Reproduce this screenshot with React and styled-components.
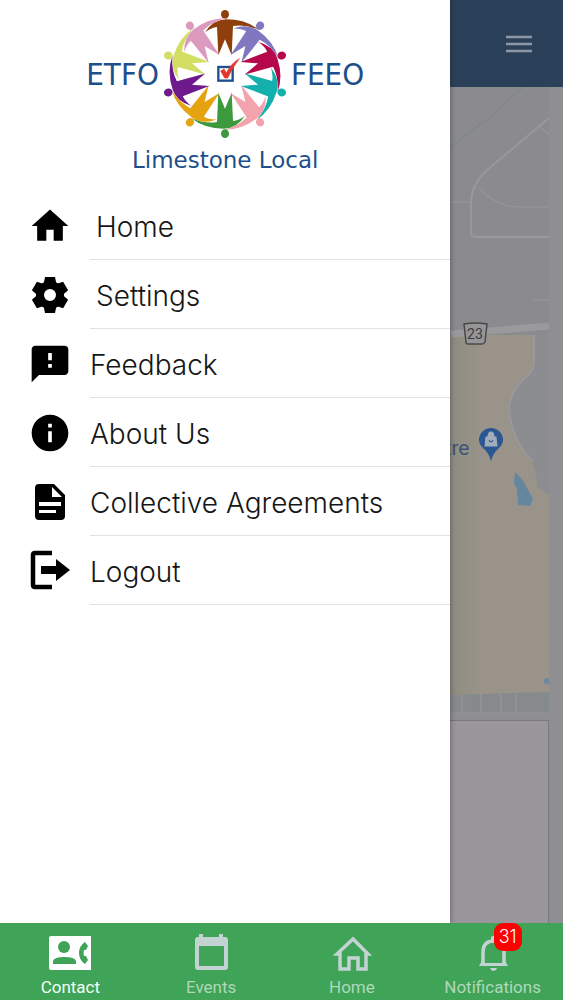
import React, { useState } from 'react'
import styled, { createGlobalStyle } from 'styled-components'
import { MdFeedback, MdHome, MdInfo } from 'react-icons/md'


const FIGURE_COLORS = [
  '#8f3f0c', '#7f78c0', '#b5074a', '#14b0ae', '#f3a3ae',
  '#3c9a3c', '#e5a312', '#6f1a8c', '#d2df62', '#dc9abf',
]

const Wheel = () => (
  <WheelSvg viewBox="-192 -192 384 384" aria-hidden="true">
    {FIGURE_COLORS.map((color, i) => (
      <g key={color} fill={color} transform={`rotate(${i * 36})`}>
        <ellipse cx="0" cy="-179" rx="12" ry="13" />
        <path d="M-60 -125 Q-36 -163 4 -164 Q62 -164 101 -133 Q60 -150 24 -144 L20 -56 L0 -104 L-20 -56 L-24 -141 Q-42 -139 -60 -125Z" />
      </g>
    ))}
    <rect x="-20" y="-21" width="43" height="41" fill="#fff" stroke="#1d4f8c" strokeWidth="7" />
    <path d="M-13 -9 L-3 -15 L4 -3 Q18 -32 43 -46 Q24 -22 8 12 L-1 12Z" fill="#e2372c" stroke="#e2372c" strokeWidth="2" />
  </WheelSvg>
)

const TOOTH_ANGLES = [0, 60, 120, 180, 240, 300]

const GearIcon = () => (
  <svg viewBox="0 0 44 44" aria-hidden="true">
    <g fill="currentColor">
      {TOOTH_ANGLES.map((angle) => (
        <path key={angle} d="M17 4H27L29 14H15Z" transform={`rotate(${angle} 22 22)`} />
      ))}
    </g>
    <circle cx="22" cy="22" r="10" fill="none" stroke="currentColor" strokeWidth="8" />
  </svg>
)

const DocumentIcon = () => (
  <svg viewBox="0 0 44 44" aria-hidden="true">
    <path
      fill="currentColor"
      fillRule="evenodd"
      d="M11 4H26L37 15V36Q37 40 33 40H11Q7 40 7 36V8Q7 4 11 4ZM24 7V17H34ZM11 22V26H33V22ZM11 30V33H28V30Z"
    />
  </svg>
)

const LogoutIcon = () => (
  <svg viewBox="0 0 44 44" aria-hidden="true">
    <path d="M24 4H7Q5 4 5 6V36Q5 38 7 38H24" fill="none" stroke="currentColor" strokeWidth="4.5" />
    <path d="M13 17H28V10L42 21L28 32V25H13Z" fill="currentColor" />
  </svg>
)

const ContactIcon = () => (
  <svg viewBox="0 0 42 42" aria-hidden="true">
    <path d="M2 4H42V38H2Q0 38 0 36V6Q0 4 2 4Z" fill="currentColor" />
    <g fill="#3fa358">
      <circle cx="15" cy="15" r="6" />
      <path d="M4 32V29Q5 25 15 25Q26 25 27 29V32Z" />
      <path d="M36 10L39 14L37 18H35Q34 21 35 24H37L39 28L36 32Q30 28 30 21Q30 14 36 10Z" />
    </g>
  </svg>
)

const CalendarIcon = () => (
  <svg viewBox="0 0 42 42" aria-hidden="true">
    <path
      fill="currentColor"
      fillRule="evenodd"
      d="M9 2H13V5H29V2H33V5H35Q38 5 38 8V35Q38 38 35 38H8Q5 38 5 35V8Q5 5 8 5H9ZM9 14V34H34V14Z"
    />
  </svg>
)

const HouseIcon = () => (
  <svg viewBox="0 0 42 42" aria-hidden="true">
    <path
      d="M6 22L22 7L37 22H35V37H27V26H18V37H9V22Z"
      fill="none"
      stroke="currentColor"
      strokeWidth="3.5"
    />
  </svg>
)

const BellIcon = () => (
  <svg viewBox="0 0 42 42" aria-hidden="true">
    <path
      d="M11 33V20Q11 9 22 9Q32 9 32 20V33"
      fill="none"
      stroke="currentColor"
      strokeWidth="3.5"
    />
    <path d="M19 8V5Q22 2 25 5V8ZM11 27V31H32V27L36 34H7ZM18 36H25Q24 39 21 39Q19 39 18 36Z" fill="currentColor" />
  </svg>
)

const Map = () => (
  <MapSvg viewBox="0 0 549 626" preserveAspectRatio="xMaxYMin slice" role="img" aria-label="Map">
    <defs>
      <linearGradient id="park" gradientUnits="userSpaceOnUse" x1="450" y1="0" x2="480" y2="0">
        <stop offset="0" stopColor="#8d8d82" />
        <stop offset="1" stopColor="#999389" />
      </linearGradient>
    </defs>
    <rect width="549" height="626" fill="#8b8a8d" />
    <path d="M0 248H549V626H0Z" fill="#8c8d90" />
    <path d="M0 248H534V274Q534 284 526 290Q510 304 509 322Q511 352 532 374Q537 388 537 400L549 408V605L451 608H0Z" fill="url(#park)" />
    <g fill="none" stroke="#99989b" strokeWidth="2">
      <path d="M549 31L486 84Q472 97 471 114V146Q471 150 476 150H549" />
      <path d="M478 100Q494 119 518 120H549M451 115H471M538 38L549 48M533 213H549" strokeWidth="1" />
      <path d="M451 247L549 239" stroke="#9a999b" strokeWidth="7" />
      <path d="M534 248V274Q534 284 526 290Q510 304 509 322Q511 352 532 374" strokeWidth="2" />
    </g>
    <path d="M451 60L476 40L490 31L510 11L523 0" fill="none" stroke="#7a8892" />
    <path d="M515 385L522 392L533 412L530 419L518 418L517 402L514 396Z" fill="#64869f" />
    <circle cx="547" cy="594" r="3" fill="#6a88a3" />
    <path d="M451 608L549 605V626H451Z" fill="#878a8c" />
    <path d="M462 608V626M481 607V626M501 607V626M516 606V626M451 626H549" stroke="#909294" strokeWidth="2" />
    <path d="M464 237Q476 235 487 237L485 255Q484 257 482 257H468Q466 257 466 255Z" fill="#969595" stroke="#4a4a4c" strokeWidth="1.5" />
    <MapText x="475" y="252" $size={14} $color="#3c3d40">23</MapText>
    <MapText x="457" y="368" $size={21} $color="#425478">tre</MapText>
    <path d="M491 374Q489 366 483 361Q479 357 479 353A12 12 0 0 1 503 353Q503 357 499 361Q493 366 491 374Z" fill="#2a5791" />
    <path d="M486 350H496L497 359H485ZM488 350Q488 345 491 345Q494 345 494 350" fill="#a3adbb" stroke="#a3adbb" />
    <path d="M489 353Q491 357 493 353" fill="none" stroke="#2a5791" />
  </MapSvg>
)

const MENU_ITEMS = [
  { label: 'Home', icon: MdHome, indented: true },
  { label: 'Settings', icon: GearIcon, indented: true },
  { label: 'Feedback', icon: MdFeedback },
  { label: 'About Us', icon: MdInfo },
  { label: 'Collective Agreements', icon: DocumentIcon },
  { label: 'Logout', icon: LogoutIcon },
]

const TABS = [
  { label: 'Contact', icon: ContactIcon },
  { label: 'Events', icon: CalendarIcon },
  { label: 'Home', icon: HouseIcon },
  { label: 'Notifications', icon: BellIcon, badge: 31 },
]

const App = () => {
  const [activeTab, setActiveTab] = useState('Contact')

  return (
    <>
      <GlobalStyle />
      <Page>
        <Stage>
          <Screen>
            <TopBar>
              <MenuButton type="button" aria-label="Menu">
                <svg viewBox="0 0 26 18" aria-hidden="true">
                  <path d="M0 2H26M0 9H26M0 16H26" stroke="currentColor" strokeWidth="2.5" />
                </svg>
              </MenuButton>
            </TopBar>
            <ScreenBody>
              <Map />
              <Card />
            </ScreenBody>
          </Screen>
          <Drawer>
            <Brand>
              <BrandRow>
                <Acronym>ETFO</Acronym>
                <Wheel />
                <Acronym>FEEO</Acronym>
              </BrandRow>
              <BrandName>Limestone Local</BrandName>
            </Brand>
            <MenuList>
              {MENU_ITEMS.map(({ label, icon: Icon, indented }) => (
                <li key={label}>
                  <MenuLink href="#">
                    <Icon />
                    <MenuLabel $indented={indented}>{label}</MenuLabel>
                  </MenuLink>
                </li>
              ))}
            </MenuList>
          </Drawer>
        </Stage>
        <TabBar>
          {TABS.map(({ label, icon: Icon, badge }) => (
            <Tab
              key={label}
              type="button"
              $active={label === activeTab}
              onClick={() => setActiveTab(label)}
            >
              <TabIcon>
                <Icon />
                {badge && <Badge>{badge}</Badge>}
              </TabIcon>
              <TabLabel $active={label === activeTab}>{label}</TabLabel>
            </Tab>
          ))}
        </TabBar>
      </Page>
    </>
  )
}

const GlobalStyle = createGlobalStyle`
  * {
    box-sizing: border-box;
  }

  body {
    margin: 0;
    font-family: Roboto, sans-serif;
  }
`

const Page = styled.div`
  display: flex;
  flex-direction: column;
  min-height: 100vh;
`

const Stage = styled.div`
  position: relative;
  display: flex;
  flex: 1;
  overflow: hidden;
`

const Screen = styled.main`
  display: flex;
  flex-direction: column;
  flex: 1;
  background: #8f8e92;
`

const TopBar = styled.header`
  display: flex;
  justify-content: flex-end;
  align-items: center;
  height: 87px;
  padding: 0 31px;
  background: #2b4159;
`

const MenuButton = styled.button`
  width: 26px;
  padding: 0;
  border: 0;
  background: none;
  color: #8d98a6;

  svg {
    display: block;
  }
`

const ScreenBody = styled.div`
  display: flex;
  flex-direction: column;
  flex: 1;
  gap: 7px;
  padding-right: 14px;
`

const MapSvg = styled.svg`
  width: 100%;
  height: 0;
  min-height: 400px;
  flex: 31 1 0;
`

const MapText = styled.text`
  font-family: Roboto, sans-serif;
  font-size: ${({ $size }) => $size}px;
  fill: ${({ $color }) => $color};
  text-anchor: middle;
`

const Card = styled.section`
  flex: 10 1 0;
  border: 1px solid #79797c;
  border-bottom: 0;
  background: #99979b;
`

const Drawer = styled.aside`
  position: absolute;
  top: 0;
  bottom: 0;
  left: 0;
  width: 80%;
  overflow-y: auto;
  background: #fff;
  box-shadow: 0 0 6px rgba(0, 0, 0, 0.4);
`

const Brand = styled.div`
  display: flex;
  flex-direction: column;
  align-items: center;
  height: 191px;
  padding-top: 10px;
  color: #1d4f8c;
  font-family: "DejaVu Sans Condensed", "DejaVu Sans", sans-serif;
`

const BrandRow = styled.div`
  display: flex;
  align-items: center;
  gap: 2px;
`

const WheelSvg = styled.svg`
  width: 128px;
  height: 128px;
`

const Acronym = styled.span`
  font-size: 31px;
  line-height: 36px;
`

const BrandName = styled.span`
  margin-top: 8px;
  font-family: "DejaVu Sans", sans-serif;
  font-size: 23px;
  line-height: 28px;
`

const MenuList = styled.ul`
  margin: 0;
  padding: 0;
  list-style: none;
`

const MenuLink = styled.a`
  display: flex;
  align-items: center;
  gap: 18px;
  padding-left: 28px;
  color: #000;
  text-decoration: none;

  svg {
    flex: none;
    width: 44px;
    height: 44px;
  }
`

const MenuLabel = styled.span`
  flex: 1;
  padding: 4px 0 0 ${({ $indented }) => ($indented ? 6 : 0)}px;
  border-bottom: 1px solid #e2e2e2;
  color: #161616;
  font-family: Inter, "Open Sans", sans-serif;
  font-size: 28px;
  font-weight: 300;
  line-height: 64px;
`

const TabBar = styled.nav`
  position: relative;
  display: grid;
  grid-template-columns: repeat(4, 1fr);
  height: 77px;
  background: #3fa358;
`

const Tab = styled.button`
  display: flex;
  flex-direction: column;
  align-items: center;
  padding: 9px 0 0;
  border: 0;
  background: none;
  color: ${({ $active }) => ($active ? '#fff' : '#c3d3d2')};
  font-family: Roboto, sans-serif;
  cursor: pointer;
`

const TabIcon = styled.span`
  position: relative;
  display: flex;

  svg {
    width: 42px;
    height: 42px;
  }
`

const TabLabel = styled.span`
  color: ${({ $active }) => ($active ? '#f4fff4' : '#b0d8ba')};
  font-size: 17px;
  line-height: 26px;
`

const Badge = styled.span`
  position: absolute;
  top: -9px;
  left: 22px;
  width: 28px;
  border-radius: 9px;
  background: #fe0000;
  color: #fff;
  font-family: Inter, sans-serif;
  font-size: 18px;
  font-weight: 300;
  line-height: 28px;
  text-align: center;
`

export default App
